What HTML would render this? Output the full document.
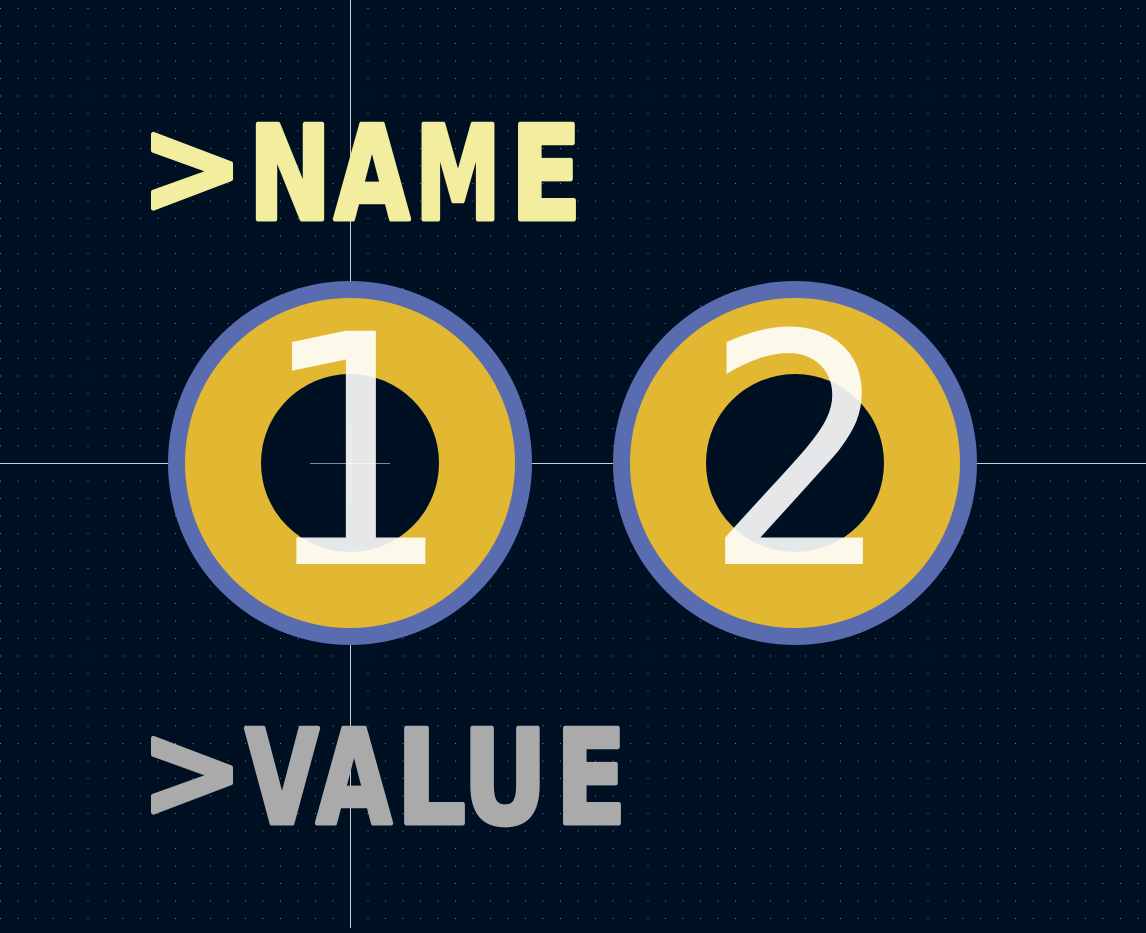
<!DOCTYPE html>
<html><head><style>html,body{margin:0;padding:0;background:#001023;overflow:hidden}</style></head>
<body>
<svg width="1146" height="928" viewBox="0 0 1146 928" xmlns="http://www.w3.org/2000/svg">
<defs>
<pattern id="g" x="0" y="8" width="17.5" height="17.5" patternUnits="userSpaceOnUse">
<rect x="0" y="0" width="1" height="1" fill="#6f7f90"/>
</pattern>
</defs>
<rect width="1146" height="928" fill="#001023"/>
<rect width="1146" height="928" fill="url(#g)"/>
<line x1="350.5" y1="0" x2="350.5" y2="928" stroke="#c8ccd2" stroke-width="1"/>
<line x1="0" y1="463.5" x2="1146" y2="463.5" stroke="#c8ccd2" stroke-width="1"/>
<g>
<circle cx="350" cy="463" r="182" fill="#5a6cb0"/>
<circle cx="350" cy="463" r="165" fill="#e2b731"/>
<circle cx="350" cy="463" r="89" fill="#001023"/>
<circle cx="795" cy="463" r="182" fill="#5a6cb0"/>
<circle cx="795" cy="463" r="165" fill="#e2b731"/>
<circle cx="795" cy="463" r="89" fill="#001023"/>
</g>
<line x1="310" y1="463.5" x2="390" y2="463.5" stroke="#888" stroke-width="1"/>
<line x1="350.5" y1="423" x2="350.5" y2="503" stroke="#888" stroke-width="1"/>
<g fill="#ffffff" fill-opacity="0.9" font-family="DejaVu Sans, sans-serif" font-size="320" text-anchor="middle">
<text transform="translate(356,564) scale(0.96,1)">1</text>
<text transform="translate(798,564) scale(0.93,1)">2</text>
</g>
<g font-family="DejaVu Sans, sans-serif" font-weight="bold" font-size="130" fill="#f2ed9f" stroke="#f2ed9f" stroke-width="5" stroke-linejoin="round" text-anchor="middle">
<text transform="translate(192,212) scale(0.95,1)">&gt;</text>
<text transform="translate(290,219) scale(0.76,1)">N</text>
<text transform="translate(372,219) scale(0.75,1)">A</text>
<text transform="translate(458,219) scale(0.66,1)">M</text>
<text transform="translate(546,219) scale(0.8,1)">E</text>
</g>
<g font-family="DejaVu Sans, sans-serif" font-weight="bold" font-size="130" fill="#aaaaaa" stroke="#aaaaaa" stroke-width="5" stroke-linejoin="round" text-anchor="middle">
<text transform="translate(192,816) scale(0.95,1)">&gt;</text>
<text transform="translate(282,823) scale(0.73,1)">V</text>
<text transform="translate(354,823) scale(0.75,1)">A</text>
<text transform="translate(431,823) scale(0.84,1)">L</text>
<text transform="translate(505,823) scale(0.8,1)">U</text>
<text transform="translate(591,823) scale(0.8,1)">E</text>
</g>
</svg>
</body></html>
